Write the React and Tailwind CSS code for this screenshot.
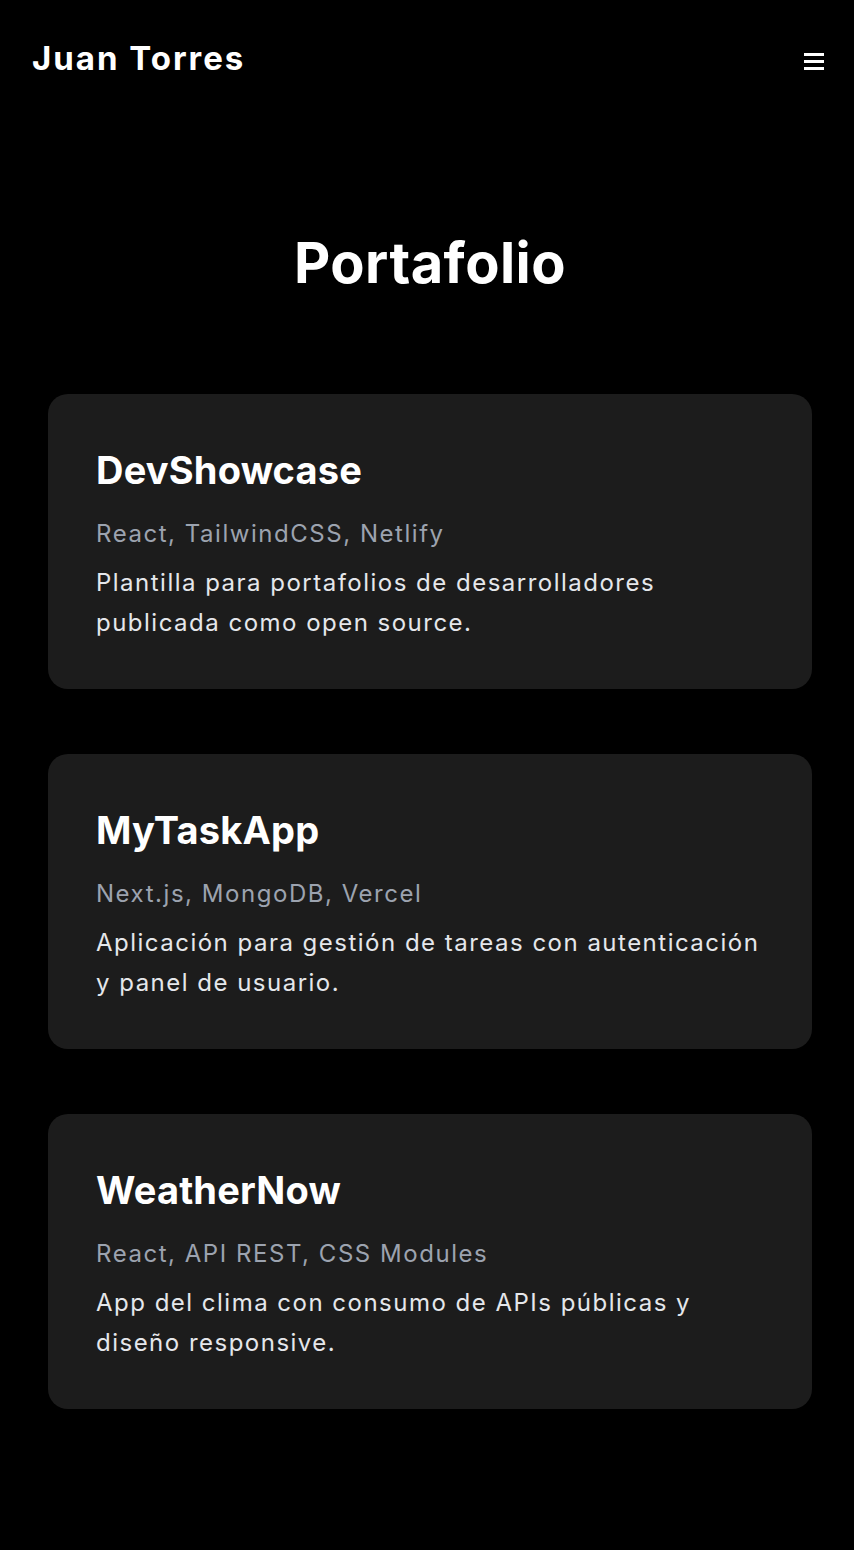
const projects = [
  {
    name: "DevShowcase",
    stack: "React, TailwindCSS, Netlify",
    description:
      "Plantilla para portafolios de desarrolladores publicada como open source.",
  },
  {
    name: "MyTaskApp",
    stack: "Next.js, MongoDB, Vercel",
    description:
      "Aplicación para gestión de tareas con autenticación y panel de usuario.",
  },
  {
    name: "WeatherNow",
    stack: "React, API REST, CSS Modules",
    description:
      "App del clima con consumo de APIs públicas y diseño responsive.",
  },
]

function ProjectCard({ project }) {
  return (
    <article className="bg-[#1c1c1c] rounded-[20px] pt-12 px-12 pb-[46px]">
      <h3 className="text-[38px] leading-[57px] font-bold text-white tracking-[0.005em]">
        {project.name}
      </h3>
      <p className="mt-[17px] text-[24px] leading-[36px] text-[#9ca3af] tracking-[0.064em]">
        {project.stack}
      </p>
      <p className="mt-[11px] text-[24px] leading-[40px] text-[#e5e7eb] tracking-[0.062em]">
        {project.description}
      </p>
    </article>
  )
}

export default function App() {
  return (
    <div className="min-h-[1550px] bg-black text-white font-['Inter',sans-serif]">
      <header className="flex items-start justify-between pt-[34px] pb-[30px] pl-8 pr-[30px]">
        <h1 className="text-[33px] leading-[48px] font-bold tracking-[0.06em]">
          Juan Torres
        </h1>
        <button className="mt-[19px] flex flex-col gap-1 w-5" aria-label="Menú">
          <span className="block h-[3px] w-5 bg-white"></span>
          <span className="block h-[3px] w-5 bg-white"></span>
          <span className="block h-[3px] w-5 bg-white"></span>
        </button>
      </header>

      <main className="pl-12 pr-[42px]">
        <h2 className="mt-[109px] mb-[89px] text-center text-[56px] leading-[84px] font-bold tracking-[0.008em]">
          Portafolio
        </h2>

        <div className="flex flex-col gap-[65px]">
          {projects.map((project) => (
            <ProjectCard key={project.name} project={project} />
          ))}
        </div>
      </main>
    </div>
  )
}
